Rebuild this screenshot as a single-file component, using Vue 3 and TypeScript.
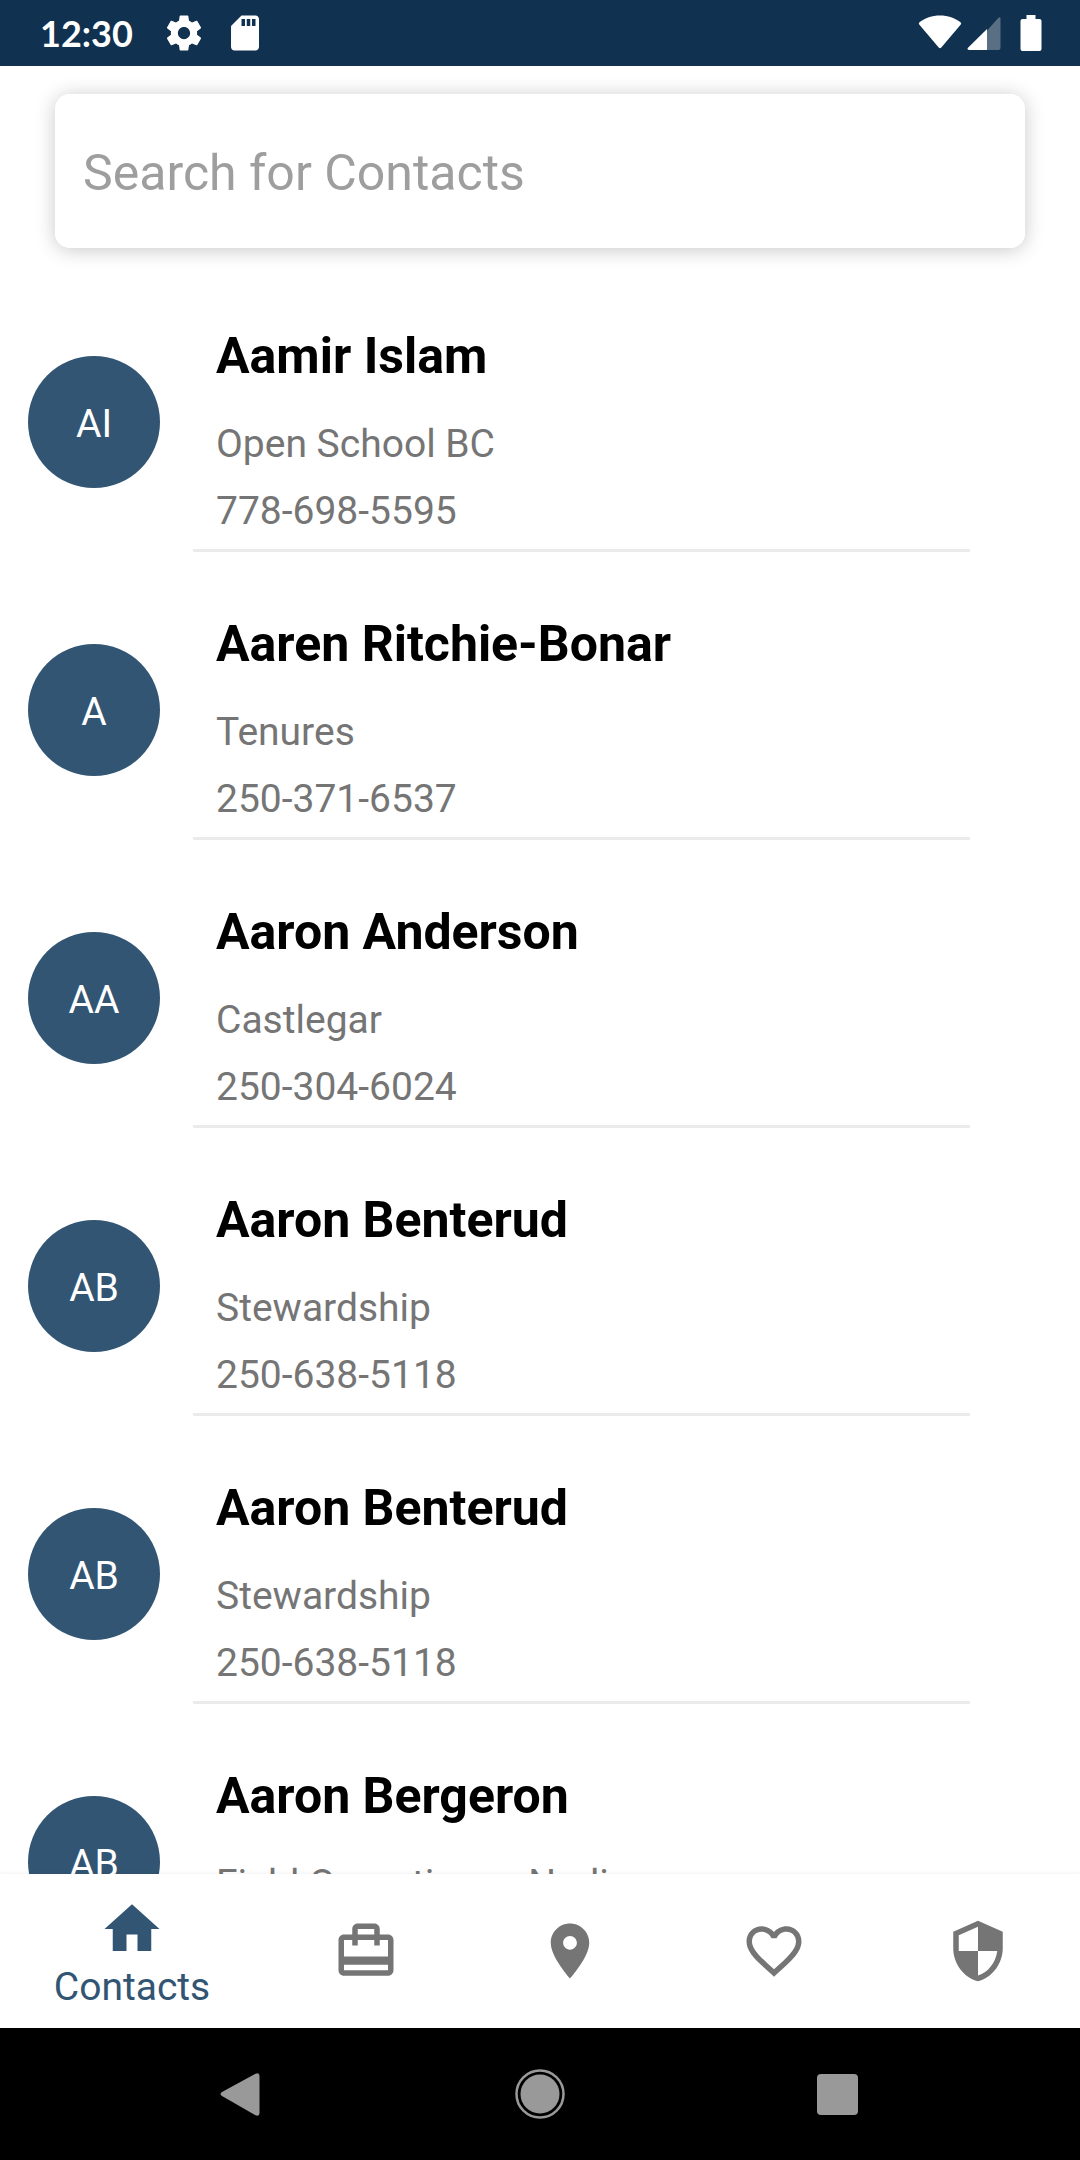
<script setup lang="ts">
import { ref } from 'vue'

interface Contact {
  id: number
  initials: string
  name: string
  office: string
  phone: string
}

interface Tab {
  id: string
  label: string
  path: string
}

const query = ref('')
const activeTab = ref('contacts')

const contacts: Contact[] = [
  { id: 1, initials: 'AI', name: 'Aamir Islam', office: 'Open School BC', phone: '778-698-5595' },
  { id: 2, initials: 'A', name: 'Aaren Ritchie-Bonar', office: 'Tenures', phone: '250-371-6537' },
  { id: 3, initials: 'AA', name: 'Aaron Anderson', office: 'Castlegar', phone: '250-304-6024' },
  { id: 4, initials: 'AB', name: 'Aaron Benterud', office: 'Stewardship', phone: '250-638-5118' },
  { id: 5, initials: 'AB', name: 'Aaron Benterud', office: 'Stewardship', phone: '250-638-5118' },
  { id: 6, initials: 'AB', name: 'Aaron Bergeron', office: 'Field Operations - Nadina', phone: '' },
]

const tabs: Tab[] = [
  { id: 'contacts', label: 'Contacts', path: 'M10 20v-6h4v6h5v-8h3L12 3 2 12h3v8z' },
  {
    id: 'travel',
    label: 'Travel',
    path: 'M20 6h-3V4c0-1.11-.89-2-2-2H9c-1.11 0-2 .89-2 2v2H4c-1.11 0-2 .89-2 2v11c0 1.11.89 2 2 2h16c1.11 0 2-.89 2-2V8c0-1.11-.89-2-2-2zM9 4h6v2H9V4zm11 15H4v-2h16v2zm0-5H4V8h3v2h2V8h6v2h2V8h3v6z',
  },
  {
    id: 'locations',
    label: 'Locations',
    path: 'M12 2C8.13 2 5 5.13 5 9c0 5.25 7 13 7 13s7-7.75 7-13c0-3.87-3.13-7-7-7zm0 9.500c-1.380 0-2.500-1.120-2.500-2.500s1.120-2.500 2.500-2.500 2.500 1.120 2.500 2.500-1.120 2.500-2.500 2.500z',
  },
  {
    id: 'favourites',
    label: 'Favourites',
    path: 'M16.500 3c-1.740 0-3.410.810-4.500 2.090C10.910 3.810 9.240 3 7.500 3 4.420 3 2 5.420 2 8.500c0 3.780 3.400 6.860 8.550 11.540L12 21.350l1.450-1.320C18.600 15.360 22 12.280 22 8.500 22 5.420 19.580 3 16.500 3zm-4.400 15.550l-.1.100-.1-.1C7.140 14.240 4 11.390 4 8.500 4 6.500 5.500 5 7.500 5c1.540 0 3.040.990 3.570 2.360h1.870C13.460 5.990 14.960 5 16.500 5c2 0 3.500 1.500 3.500 3.500 0 2.890-3.140 5.740-7.900 10.050z',
  },
  {
    id: 'safety',
    label: 'Safety',
    path: 'M12 1L3 5v6c0 5.550 3.840 10.740 9 12 5.160-1.260 9-6.450 9-12V5l-9-4zm0 10.990h7c-.530 4.120-3.280 7.790-7 8.940V12H5V6.300l7-3.110v8.800z',
  },
]
</script>

<template>
  <div class="screen">
    <header class="status-bar">
      <span class="clock">12:30</span>
      <svg class="status-icon" viewBox="0 0 24 24" aria-hidden="true">
        <path d="M19.430 12.980c.040-.320.070-.640.070-.980s-.030-.660-.070-.980l2.110-1.650c.190-.150.240-.420.120-.640l-2-3.460c-.120-.220-.390-.300-.610-.220l-2.490 1c-.520-.400-1.080-.730-1.690-.980l-.380-2.650C14.460 2.180 14.250 2 14 2h-4c-.250 0-.460.180-.490.420l-.380 2.650c-.610.250-1.170.590-1.690.980l-2.490-1c-.230-.090-.490 0-.610.220l-2 3.460c-.130.220-.070.490.120.640l2.110 1.650c-.040.320-.070.650-.070.980s.030.660.070.980l-2.110 1.650c-.190.150-.240.420-.120.640l2 3.460c.120.220.390.300.610.220l2.490-1c.520.400 1.080.730 1.690.980l.380 2.650c.030.240.240.420.490.420h4c.250 0 .460-.180.490-.420l.380-2.650c.610-.250 1.170-.590 1.690-.980l2.490 1c.230.090.490 0 .610-.220l2-3.460c.120-.220.070-.490-.120-.640l-2.110-1.650zM12 15.500c-1.930 0-3.500-1.570-3.500-3.500s1.570-3.500 3.500-3.500 3.500 1.570 3.500 3.500-1.570 3.500-3.500 3.500z" />
      </svg>
      <svg class="status-icon" viewBox="0 0 24 24" aria-hidden="true">
        <path d="M18 2h-8L4.020 8 4 20c0 1.100.900 2 2 2h12c1.100 0 2-.900 2-2V4c0-1.100-.900-2-2-2zm-6 6h-2V4h2v4zm3 0h-2V4h2v4zm3 0h-2V4h2v4z" />
      </svg>
      <div class="signals">
        <svg width="44" height="36" viewBox="0 0 44 36" aria-hidden="true">
          <path d="M1.200 9.500Q.200 8.300 1.500 7.300C7 3 14 .5 22 .5S37 3 42.500 7.300Q43.800 8.300 42.800 9.500L23.300 32.500Q22 34 20.700 32.500Z" />
        </svg>
        <svg width="34" height="36" viewBox="0 0 34 36" aria-hidden="true">
          <path opacity=".3" d="M20 15.500L31.300 3Q33 1.500 33.500 3.500V33Q33.500 35 31.500 35H20Z" />
          <path d="M20 14V35H2Q-.5 34.500 1 32.700Z" />
        </svg>
        <svg class="battery" width="22" height="36" viewBox="0 0 22 36" aria-hidden="true">
          <path d="M6.500 0H15.500V4H19.500Q21.500 4 21.500 6V34Q21.500 36 19.500 36H2.500Q.5 36 .5 34V6Q.5 4 2.500 4H6.500Z" />
        </svg>
      </div>
    </header>

    <main class="content">
      <form class="search" role="search" @submit.prevent>
        <input v-model="query" class="search-input" type="text" placeholder="Search for Contacts" aria-label="Search for Contacts" />
      </form>

      <ul class="contacts">
        <li v-for="contact in contacts" :key="contact.id" class="contact">
          <div class="avatar">{{ contact.initials }}</div>
          <div class="details">
            <h2 class="name">{{ contact.name }}</h2>
            <p class="line">{{ contact.office }}</p>
            <p class="line">{{ contact.phone }}</p>
          </div>
        </li>
      </ul>
    </main>

    <nav class="tabs">
      <button
        v-for="tab in tabs"
        :key="tab.id"
        type="button"
        class="tab"
        :class="{ active: tab.id === activeTab }"
        :aria-label="tab.label"
        @click="activeTab = tab.id"
      >
        <svg class="tab-icon" viewBox="0 0 24 24" aria-hidden="true"><path :d="tab.path" /></svg>
        <span v-if="tab.id === activeTab" class="tab-label">{{ tab.label }}</span>
      </button>
    </nav>

    <footer class="system-bar">
      <button type="button" class="system-button" aria-label="Back">
        <svg width="50" height="50" viewBox="0 0 50 50" aria-hidden="true">
          <path d="M5 27Q2 25 5 23L38 5Q42.500 3 42.500 7V44Q42.500 48 38 46Z" />
        </svg>
      </button>
      <button type="button" class="system-button" aria-label="Home">
        <svg width="50" height="50" viewBox="0 0 50 50" aria-hidden="true">
          <circle cx="25" cy="25" r="19.500" />
          <circle cx="25" cy="25" r="23.500" fill="none" stroke="#999" stroke-width="2.500" />
        </svg>
      </button>
      <button type="button" class="system-button" aria-label="Recent apps">
        <svg width="50" height="50" viewBox="0 0 50 50" aria-hidden="true">
          <rect x="4" y="5" width="41" height="41" rx="4" />
        </svg>
      </button>
    </footer>
  </div>
</template>

<style>
body {
  margin: 0;
  background: #fff;
}
</style>

<style scoped>
.screen {
  display: flex;
  flex-direction: column;
  height: 100vh;
  background: #fff;
  font-family: Roboto, sans-serif;
}

.status-bar {
  display: flex;
  align-items: center;
  flex: none;
  height: 66px;
  padding: 0 38px 0 40px;
  background: #10314f;
  fill: #fff;
}

.clock {
  margin-right: 30px;
  color: #fff;
  font-family: Lato, sans-serif;
  font-size: 36px;
  font-weight: 700;
  line-height: 66px;
}

.status-icon {
  width: 42px;
  height: 42px;
  margin-right: 19px;
}

.signals {
  display: flex;
  gap: 5px;
  margin-left: auto;
}

.battery {
  margin-left: 14px;
}

.content {
  flex: 1;
  min-height: 0;
  overflow: hidden;
}

.search {
  margin: 28px 55px 16px;
  border-radius: 15px;
  box-shadow: 0 2px 20px rgba(0, 0, 0, 0.22);
}

.search-input {
  display: block;
  box-sizing: border-box;
  width: 100%;
  height: 154px;
  padding: 4px 28px 0;
  border: 0;
  border-radius: 15px;
  outline: 0;
  background: #fff;
  color: #000;
  font-family: inherit;
  font-size: 50px;
}

.search-input::placeholder {
  color: #9e9e9e;
  opacity: 1;
}

.contacts {
  margin: 0;
  padding: 0;
  list-style: none;
}

.contact {
  display: flex;
  align-items: center;
  padding: 0 110px 0 28px;
}

.avatar {
  flex: none;
  width: 132px;
  height: 132px;
  margin-top: 28px;
  border-radius: 50%;
  background: #325573;
  color: #fff;
  font-size: 39px;
  line-height: 136px;
  text-align: center;
}

.details {
  flex: 1;
  min-width: 0;
  margin-left: 33px;
  padding: 58px 23px 4px;
  border-bottom: 3px solid #ebebeb;
}

.name {
  margin: 0 0 21px;
  color: #000;
  font-size: 50px;
  font-weight: 700;
  line-height: 68px;
}

.line {
  min-height: 67px;
  margin: 0;
  color: #757575;
  font-size: 39px;
  line-height: 67px;
}

.tabs {
  z-index: 1;
  display: flex;
  flex: none;
  height: 154px;
  background: #fff;
  box-shadow: 0 0 5px rgba(0, 0, 0, 0.08);
}

.tab {
  display: flex;
  flex: 204;
  flex-direction: column;
  align-items: center;
  justify-content: center;
  padding: 0;
  border: 0;
  background: none;
  color: #757575;
  font-family: inherit;
}

.tab.active {
  flex: 264;
  padding-top: 4px;
  color: #325573;
}

.tab-icon {
  width: 66px;
  height: 66px;
  fill: currentColor;
}

.tab-label {
  margin-top: 2px;
  font-size: 39px;
  line-height: 46px;
}

.system-bar {
  display: flex;
  align-items: center;
  justify-content: center;
  flex: none;
  gap: 23%;
  height: 132px;
  background: #000;
}

.system-button {
  display: flex;
  padding: 0;
  border: 0;
  background: none;
  fill: #999;
}
</style>
